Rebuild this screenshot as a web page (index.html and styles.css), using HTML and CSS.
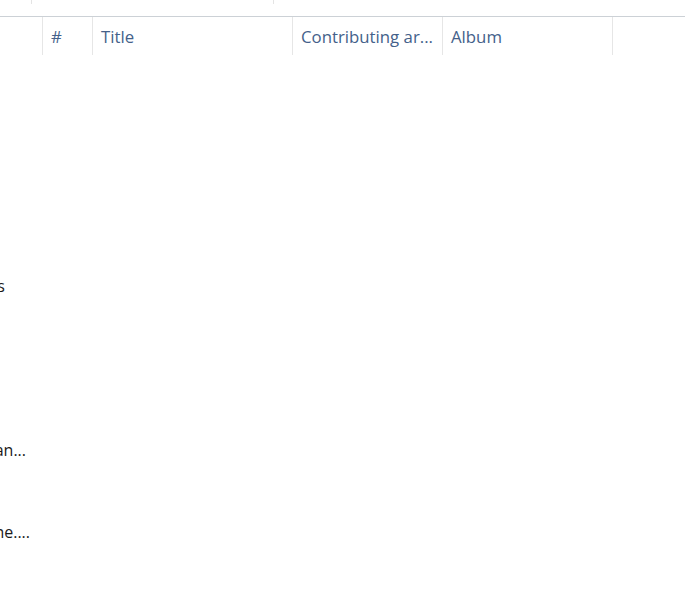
FILE: index.html
```html
<!DOCTYPE html>
<html>
<head>
<meta charset="utf-8">
<link rel="stylesheet" href="styles.css">
</head>
<body>
<div class="page">
  <div class="topbar">
    <div class="tb tb1"></div>
    <div class="tb tb2"></div>
    <div class="tb tb3"></div>
  </div>
  <div class="header">
    <div class="col c0"></div>
    <div class="col c1">#</div>
    <div class="col c2">Title</div>
    <div class="col c3">Contributing ar...</div>
    <div class="col c4">Album</div>
    <div class="col c5"></div>
  </div>
  <div class="body">
    <div class="side">
      <div class="row"></div>
      <div class="row"></div>
      <div class="row r-songs"><span>Songs</span></div>
      <div class="row"></div>
      <div class="row r-mid"><span>Best of Morgan...</span></div>
      <div class="row r-last"><span>Summer Road Theme....</span></div>
    </div>
  </div>
</div>
</body>
</html>
```
FILE: styles.css
```css
html, body {
  margin: 0;
  padding: 0;
  background: #ffffff;
}
.page {
  width: 685px;
  height: 615px;
  overflow: hidden;
  font-family: "Open Sans", "Noto Sans", sans-serif;
}
.topbar {
  display: flex;
  height: 16px;
  border-bottom: 1px solid #ccd1d6;
}
.tb {
  height: 4px;
}
.tb1 {
  width: 31px;
  border-right: 1px solid #e4e4e4;
}
.tb2 {
  width: 241px;
  border-right: 1px solid #e4e4e4;
}
.header {
  display: flex;
  height: 38px;
  color: #44618a;
  font-size: 16.8px;
}
.col {
  box-sizing: border-box;
  height: 38px;
  line-height: 38px;
  padding-left: 8px;
  padding-top: 1px;
  white-space: nowrap;
  overflow: hidden;
  border-right: 1px solid #e6e6e6;
}
.c0 { width: 43px; }
.c1 { width: 50px; }
.c2 { width: 200px; }
.c3 { width: 150px; }
.c4 { width: 170px; }
.c5 { border-right: none; flex: 1; }
.body {
  display: flex;
  padding-top: 26px;
}
.side {
  width: 30px;
  display: flex;
  flex-direction: column;
}
.row {
  height: 82px;
  display: flex;
  justify-content: flex-end;
  align-items: center;
  white-space: nowrap;
  font-size: 16px;
  color: #1a1a1a;
}
.r-songs { padding-right: 25px; }
.r-mid { padding-right: 4px; }
.r-last { padding-right: 0; }
```
